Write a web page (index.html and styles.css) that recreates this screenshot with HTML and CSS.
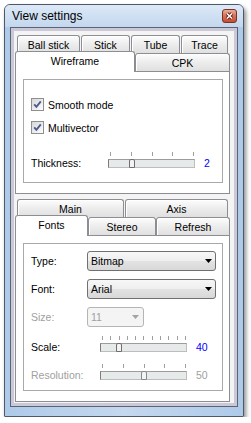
FILE: index.html
```html
<!DOCTYPE html>
<html>
<head>
<meta charset="utf-8">
<title>View settings</title>
<link rel="stylesheet" href="styles.css">
</head>
<body>
<div class="window">
  <div class="titlebar">
    <span class="title">View settings</span>
    <span class="close">
      <svg width="15" height="14" viewBox="0 0 15 14">
        <defs>
          <linearGradient id="cg" x1="0" y1="0" x2="0" y2="1">
            <stop offset="0" stop-color="#eeb3a4"/>
            <stop offset="0.45" stop-color="#d9745c"/>
            <stop offset="1" stop-color="#c24a30"/>
          </linearGradient>
        </defs>
        <rect x="0.5" y="0.5" width="14" height="13" rx="2.5" fill="url(#cg)" stroke="#7d3323"/>
        <path d="M5 4.5l5 5M10 4.5l-5 5" stroke="#5a1e12" stroke-width="3.2"/>
        <path d="M5 4.5l5 5M10 4.5l-5 5" stroke="#fff" stroke-width="1.6"/>
      </svg>
    </span>
  </div>
  <div class="client">
    <div class="client-inner">

      <div class="tabwidget">
        <div class="tabrow back">
          <div class="tab w-ball">Ball stick</div>
          <div class="tab w-stick">Stick</div>
          <div class="tab w-tube">Tube</div>
          <div class="tab w-trace">Trace</div>
        </div>
        <div class="tabrow front">
          <div class="tab sel w-wire">Wireframe</div>
          <div class="tab w-cpk">CPK</div>
        </div>
        <div class="pane">
          <div class="group group-top">
            <div class="cbrow">
              <svg class="cb" width="13" height="13" viewBox="0 0 13 13">
                <defs>
                  <linearGradient id="cbg" x1="0" y1="0" x2="1" y2="1">
                    <stop offset="0" stop-color="#d6d6d6"/>
                    <stop offset="1" stop-color="#ffffff"/>
                  </linearGradient>
                </defs>
                <rect x="0.5" y="0.5" width="12" height="12" fill="url(#cbg)" stroke="#8e8f8f"/>
                <path d="M3.2 6.3L5.4 8.8L9.8 3.4" fill="none" stroke="#4a5c94" stroke-width="1.9"/>
              </svg>
              <span>Smooth mode</span>
            </div>
            <div class="cbrow">
              <svg class="cb" width="13" height="13" viewBox="0 0 13 13">
                <rect x="0.5" y="0.5" width="12" height="12" fill="url(#cbg)" stroke="#8e8f8f"/>
                <path d="M3.2 6.3L5.4 8.8L9.8 3.4" fill="none" stroke="#4a5c94" stroke-width="1.9"/>
              </svg>
              <span>Multivector</span>
            </div>
            <div class="srow first-top">
              <span class="slabel wide">Thickness:</span>
              <div class="slider">
                <div class="ticks"><i></i><i></i><i></i><i></i><i></i></div>
                <div class="groove"></div>
                <span class="handle" style="left:21px">
                  <svg width="6" height="9" viewBox="0 0 6 9"><path d="M0.5 8.5V2Q0.5 0.5 2 0.5H4Q5.5 0.5 5.5 2V8.5Z" fill="#f3f3f3" stroke="#6f6f6f"/></svg>
                </span>
              </div>
              <span class="value blue">2</span>
            </div>
          </div>
        </div>
      </div>

      <div class="tabwidget">
        <div class="tabrow back">
          <div class="tab w-main">Main</div>
          <div class="tab w-axis">Axis</div>
        </div>
        <div class="tabrow front">
          <div class="tab sel w-fonts">Fonts</div>
          <div class="tab w-stereo">Stereo</div>
          <div class="tab w-refresh">Refresh</div>
        </div>
        <div class="pane">
          <div class="group group-bottom">
            <div class="crow">
              <span class="clabel">Type:</span>
              <div class="combo wide">
                <span>Bitmap</span>
                <svg class="arrow" width="7" height="4" viewBox="0 0 7 4"><path d="M0 0H7L3.5 4Z" fill="#000"/></svg>
              </div>
            </div>
            <div class="crow">
              <span class="clabel">Font:</span>
              <div class="combo wide">
                <span>Arial</span>
                <svg class="arrow" width="7" height="4" viewBox="0 0 7 4"><path d="M0 0H7L3.5 4Z" fill="#000"/></svg>
              </div>
            </div>
            <div class="crow">
              <span class="clabel disabled">Size:</span>
              <div class="combo narrow off">
                <span>11</span>
                <svg class="arrow" width="7" height="4" viewBox="0 0 7 4"><path d="M0 0H7L3.5 4Z" fill="#a3a3a3"/></svg>
              </div>
            </div>
            <div class="srow first-bottom">
              <span class="slabel">Scale:</span>
              <div class="slider">
                <div class="ticks"><i></i><i></i><i></i><i></i><i></i><i></i><i></i><i></i><i></i><i></i><i></i></div>
                <div class="groove"></div>
                <span class="handle" style="left:16px">
                  <svg width="6" height="9" viewBox="0 0 6 9"><path d="M0.5 8.5V2Q0.5 0.5 2 0.5H4Q5.5 0.5 5.5 2V8.5Z" fill="#f3f3f3" stroke="#6f6f6f"/></svg>
                </span>
              </div>
              <span class="value blue">40</span>
            </div>
            <div class="srow second-bottom">
              <span class="slabel disabled">Resolution:</span>
              <div class="slider">
                <div class="ticks"><i></i><i></i><i></i><i></i><i></i></div>
                <div class="groove"></div>
                <span class="handle" style="left:41px">
                  <svg width="6" height="9" viewBox="0 0 6 9"><path d="M0.5 8.5V2Q0.5 0.5 2 0.5H4Q5.5 0.5 5.5 2V8.5Z" fill="#f3f3f3" stroke="#8a8a8a"/></svg>
                </span>
              </div>
              <span class="value disabled">50</span>
            </div>
          </div>
        </div>
      </div>

    </div>
  </div>
</div>
</body>
</html>
```

FILE: styles.css
```css
* { box-sizing: border-box; }

body {
  margin: 0;
  background: #ffffff;
  font-family: "Liberation Sans", Arial, sans-serif;
  font-size: 10.5px;
  color: #000;
}

.window {
  margin: 4px 0 0 4px;
  width: 240px;
  height: 413px;
  border: 1px solid #4f5868;
  border-radius: 6px 6px 1px 1px;
  background: linear-gradient(to right, #aecae9, #c4d8ef 50%, #aecae9);
  padding: 0 5px 9px;
  box-shadow: 2px 3px 4px rgba(0, 0, 0, 0.45);
  display: flex;
  flex-direction: column;
}

.titlebar {
  height: 22px;
  margin: 0 -5px;
  padding: 0 6px 0 7px;
  display: flex;
  align-items: center;
  justify-content: space-between;
  background: linear-gradient(#dce9f7, #c3d7ee);
  border-radius: 5px 5px 0 0;
}

.title {
  font-size: 12px;
  color: #000;
}

.close svg, .cb, .arrow { display: block; }

.client {
  height: 380px;
  border: 1px solid #5b6473;
  background: #cbc9d7;
  padding: 3px;
}

.client-inner {
  height: 100%;
  background: #f4f4f4;
  padding: 4px 4px 1px 1px;
  display: flex;
  flex-direction: column;
}

.tabwidget {
  display: flex;
  flex-direction: column;
}

.tabwidget + .tabwidget { margin-top: 5px; }

.tabrow {
  display: flex;
  height: 18px;
  align-items: flex-end;
}

.tabrow.back {
  padding-left: 2px;
  gap: 1px;
}

.tab {
  flex: none;
  height: 18px;
  border: 1px solid #8c8e94;
  border-bottom: none;
  border-radius: 3px 3px 0 0;
  background: linear-gradient(#fdfdfd, #eeeeee 45%, #e0e0e0);
  box-shadow: inset 1px 1px 0 #fff;
  display: flex;
  align-items: center;
  justify-content: center;
  white-space: nowrap;
}

.tab.sel {
  height: 21px;
  margin-bottom: -1px;
  padding-bottom: 2px;
  background: #ffffff;
  box-shadow: none;
  z-index: 1;
}

.w-ball { width: 63px; }
.w-stick { width: 49px; }
.w-tube { width: 49px; }
.w-trace { width: 47px; }
.w-wire { width: 120px; }
.w-cpk { width: 95px; }
.w-main { width: 107px; }
.w-axis { width: 103px; }
.w-fonts { width: 73px; }
.w-stereo { width: 68px; }
.w-refresh { width: 74px; }

.pane {
  background: #ffffff;
  border: 1px solid #8c8e94;
  padding: 7px 6px 10px 7px;
}

.group {
  border: 1px solid #a9a9a9;
  padding-left: 7px;
}

.group-top {
  height: 104px;
  padding-top: 18px;
}

.group-bottom {
  height: 148px;
  padding-top: 7px;
}

.cbrow {
  display: flex;
  align-items: center;
  gap: 4px;
  height: 13px;
}

.cbrow + .cbrow { margin-top: 10px; }

.srow {
  display: flex;
  align-items: flex-end;
}

.first-top { margin-top: 18px; }
.first-bottom { margin-top: 9px; }
.second-bottom { margin-top: 12px; }

.slabel {
  width: 69px;
  line-height: 9px;
  white-space: nowrap;
}

.slabel.wide { width: 77px; }

.slider {
  position: relative;
  width: 87px;
  height: 16px;
}

.ticks {
  display: flex;
  justify-content: space-between;
  height: 4px;
  padding: 0 1px 0 2px;
}

.ticks i {
  width: 1px;
  height: 4px;
  background: #a0a0a0;
}

.groove {
  margin-top: 3px;
  height: 9px;
  border: 1px solid #bdbdbd;
  border-left-color: #7c7c7c;
  border-top-color: #9c9c9c;
  background: #e7eaea;
}

.handle {
  position: absolute;
  top: 7px;
  width: 6px;
  height: 9px;
}

.handle svg { display: block; }

.value {
  margin-left: 9px;
  line-height: 9px;
}

.blue { color: #0000ff; }
.disabled { color: #a0a0a0; }

.crow {
  display: flex;
  align-items: center;
  height: 20px;
}

.crow + .crow { margin-top: 8px; }

.clabel { width: 56px; }

.combo {
  height: 20px;
  border: 1px solid #707070;
  border-radius: 3px;
  background: linear-gradient(#f7f7f7, #eeeeee 50%, #e3e3e3 50%, #d8d8d8);
  display: flex;
  align-items: center;
  padding-left: 3px;
}

.combo.wide { width: 129px; }
.combo.narrow { width: 57px; }

.combo .arrow {
  margin-left: auto;
  margin-right: 3px;
}

.combo.off {
  border-color: #b5b5b5;
  background: #f4f4f4;
  color: #a0a0a0;
}

.combo.off .arrow { margin-right: 4px; }
```
